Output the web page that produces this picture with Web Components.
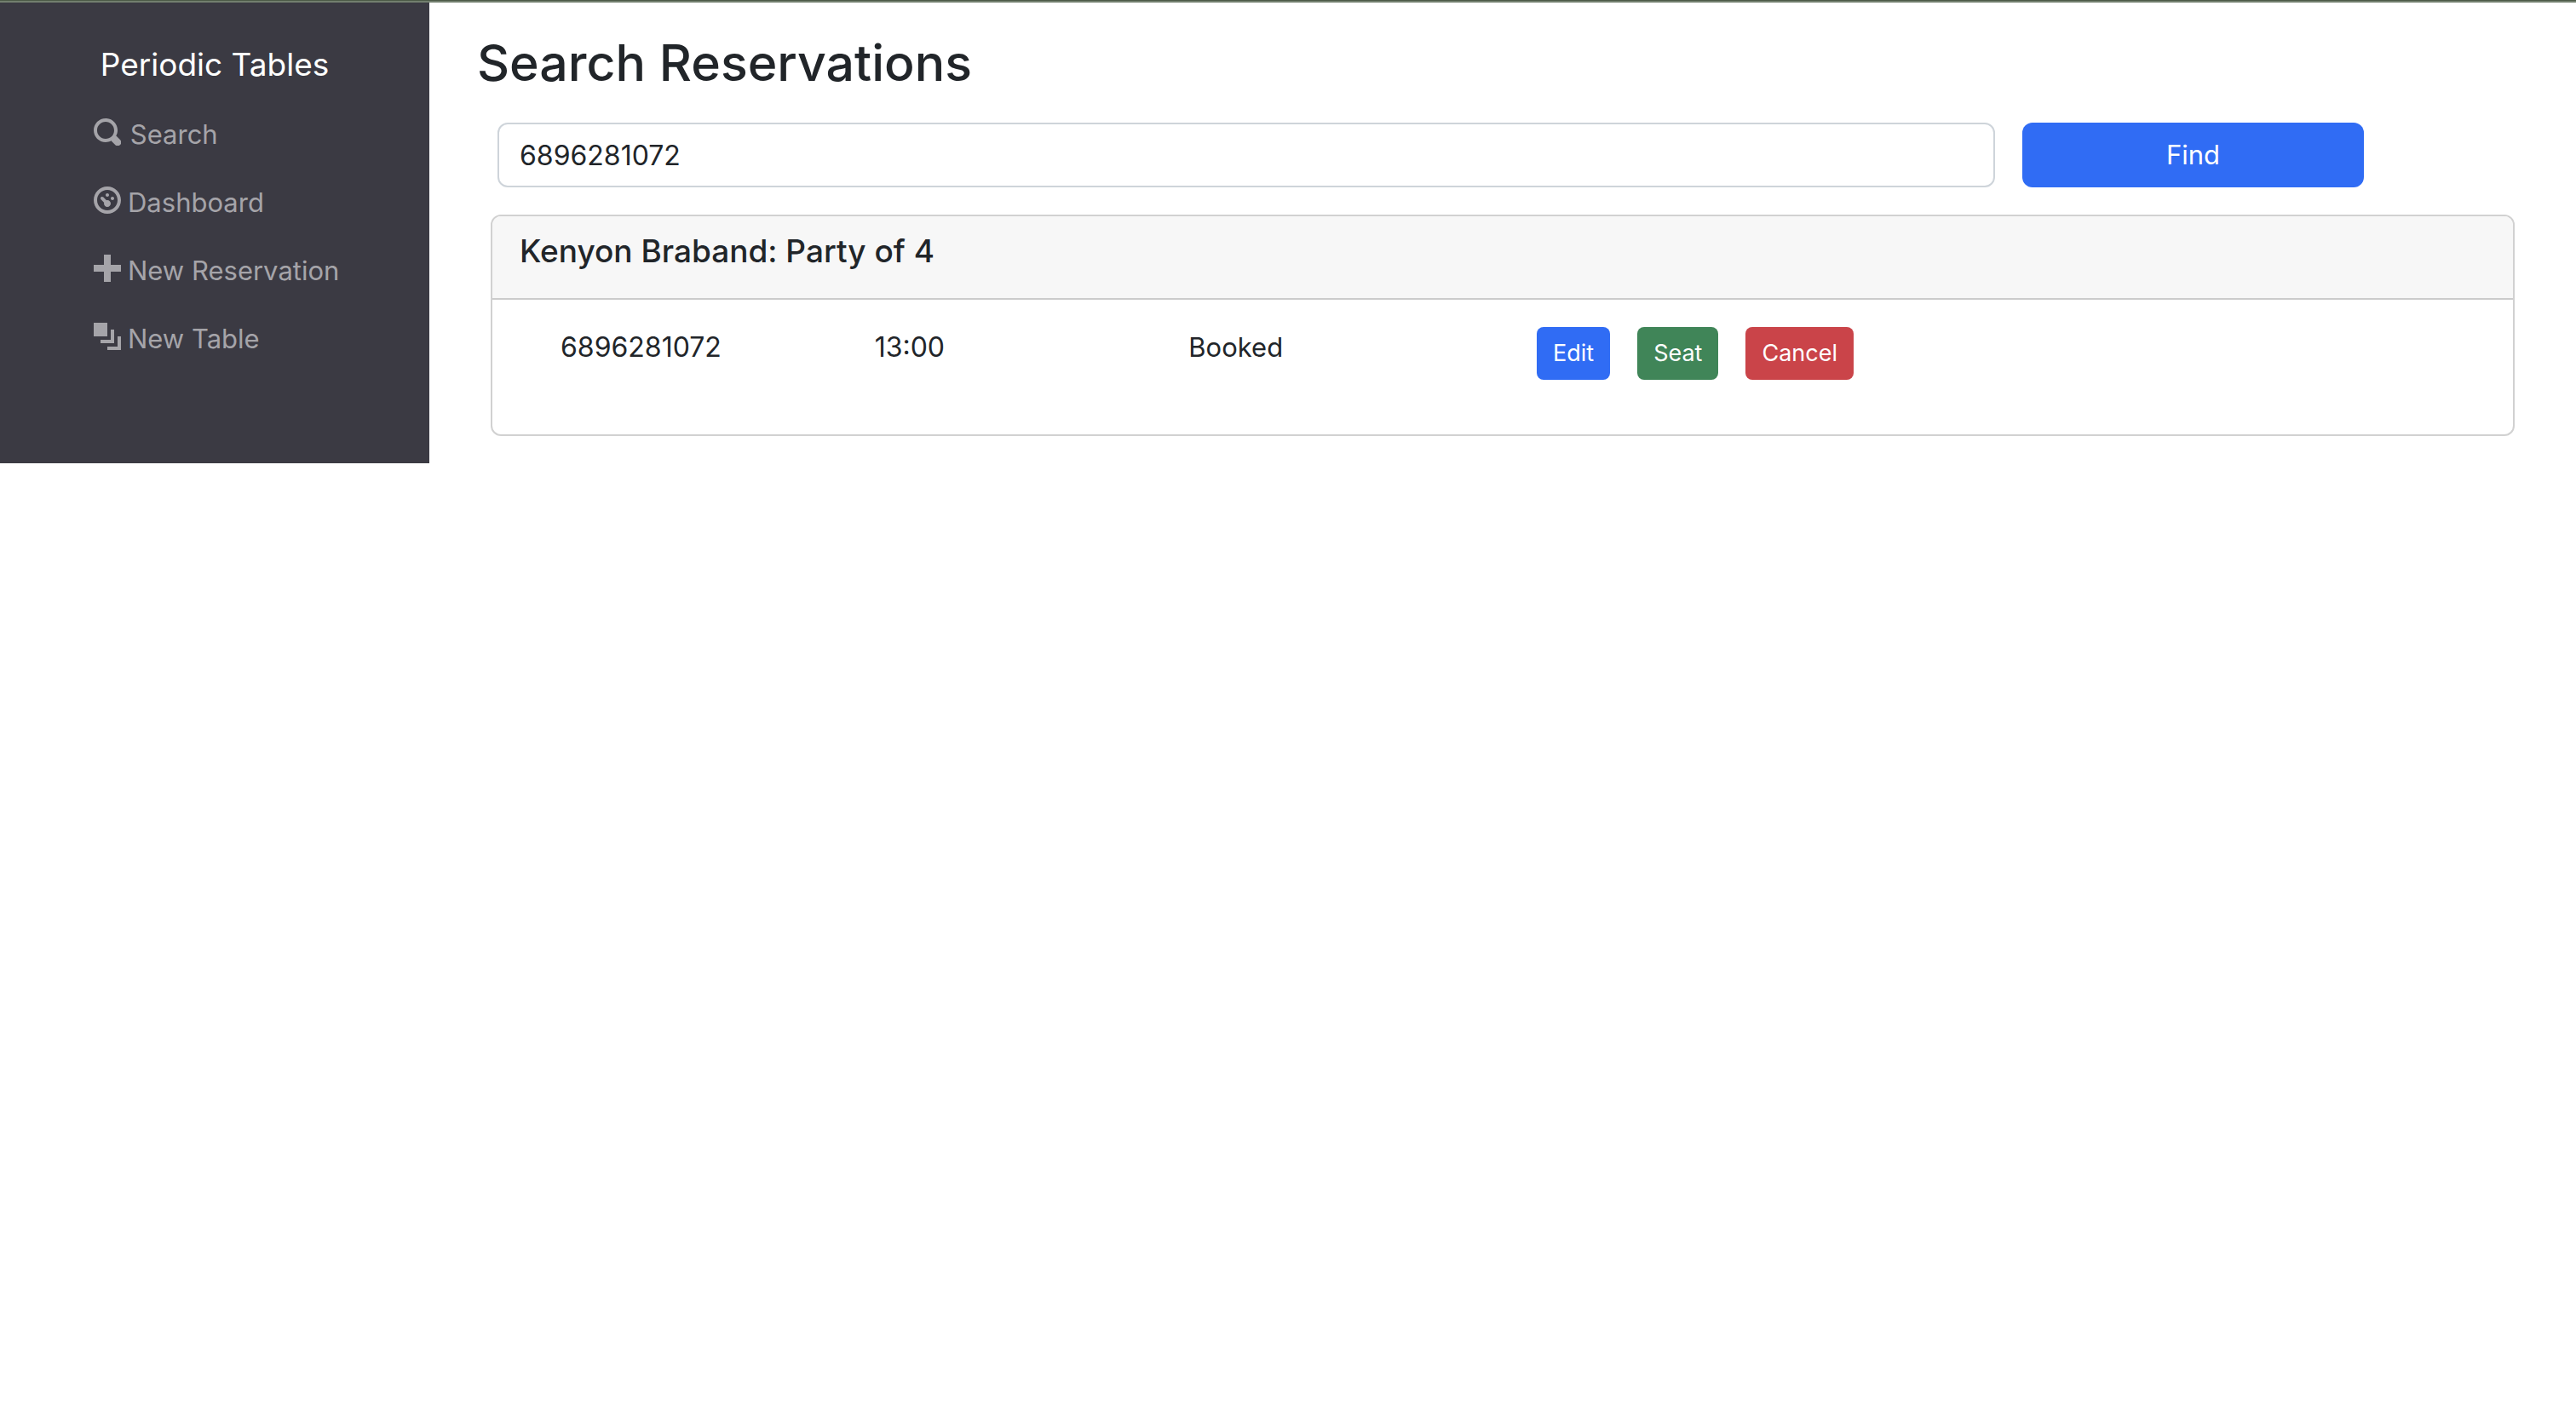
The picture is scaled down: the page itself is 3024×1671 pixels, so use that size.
<!DOCTYPE html>
<html lang="en">
<head>
<meta charset="utf-8">
<meta name="viewport" content="width=device-width, initial-scale=1">
<title>Periodic Tables</title>
<style>
  html { --ink: #212529; --blue: #306cf4; --green: #408558; --red: #ca4449; --number-size: 32px; }
  body { margin: 0; background: #fff; color: var(--ink); font: 400 31px/48px Inter, "Liberation Sans", sans-serif; }
</style>
</head>
<body>
<app-shell>
  <side-nav slot="nav" brand="Periodic Tables">
    <nav-link href="#search" icon="search">&hairsp;Search</nav-link>
    <nav-link href="#dashboard" icon="dashboard">Dashboard</nav-link>
    <nav-link href="#reservations" icon="plus">New Reservation</nav-link>
    <nav-link href="#tables" icon="layers">New Table</nav-link>
  </side-nav>
  <page-title>Search Reservations</page-title>
  <search-form value="6896281072">Find</search-form>
  <reservation-card>
    <span slot="title">Kenyon Braband: Party of 4</span>
    <span slot="phone">6896281072</span>
    <span slot="time">13:00</span>
    <span slot="status">Booked</span>
    <action-button slot="actions" tone="blue">Edit</action-button>
    <action-button slot="actions" tone="green">Seat</action-button>
    <action-button slot="actions" tone="red">Cancel</action-button>
  </reservation-card>
</app-shell>

<script>
const define = (name, render, after) => customElements.define(name, class extends HTMLElement {
  connectedCallback() {
    if (this.shadowRoot) return;
    this.attachShadow({ mode: "open" }).innerHTML = render(this);
    if (after) after(this);
  }
});

// 8 x 8 unit icon shapes
const icons = {
  search: "M3.5 0c-1.93 0-3.5 1.57-3.5 3.5s1.57 3.5 3.5 3.5c.59 0 1.17-.14 1.66-.41a1 1 0 0 0 .13.13l1 1a1.02 1.02 0 1 0 1.44-1.44l-1-1a1 1 0 0 0-.16-.13c.27-.49.44-1.06.44-1.66 0-1.93-1.55-3.5-3.5-3.5zm0 1c1.39 0 2.5 1.11 2.5 2.5 0 .66-.24 1.27-.66 1.72-.01.01-.02.02-.03.03a1 1 0 0 0-.13.13c-.44.4-1.04.63-1.69.63-1.39 0-2.5-1.11-2.5-2.5s1.11-2.5 2.5-2.5z",
  dashboard: "M4 0c-2.2 0-4 1.8-4 4s1.8 4 4 4 4-1.8 4-4-1.8-4-4-4zm0 1c1.66 0 3 1.34 3 3s-1.34 3-3 3-3-1.34-3-3 1.34-3 3-3zm0 1c-.28 0-.5.22-.5.5s.22.5.5.5.5-.22.5-.5-.22-.5-.5-.5zm-1.66 1a.5.5 0 0 0-.19.84l.91.91c-.02.08-.06.16-.06.25 0 .55.45 1 1 1s1-.45 1-1-.45-1-1-1c-.09 0-.17.04-.25.06l-.91-.91a.5.5 0 0 0-.44-.16.5.5 0 0 0-.06 0zm3.16 0c-.28 0-.5.22-.5.5s.22.5.5.5.5-.22.5-.5-.22-.5-.5-.5z",
  plus: "M3 0v3h-3v2h3v3h2v-3h3v-2h-3v-3h-2z",
  layers: "M0 0v4h4v-4h-4zm5 2v3h-3v1h4v-4h-1zm2 2v3h-3v1h4v-4h-1z"
};

define("app-shell", () => `
  <style>
    :host { display: block; }
    .strip { height: 2px; border-top: 1px solid #4c5a47; background: #727f6e; }
    .layout { display: grid; grid-template-columns: 1fr 5fr; }
    main { min-width: 0; padding: 31px 72px 32px 56px; }
  </style>
  <div class="strip"></div>
  <div class="layout"><slot name="nav"></slot><main><slot></slot></main></div>`);

define("side-nav", el => `
  <style>
    :host { display: block; background: #3b3a43; color: #fff; padding: 45px 24px 64px; box-sizing: border-box; }
    .brand { display: block; text-align: center; font-size: 37px; line-height: 56px; color: inherit; text-decoration: none; }
    nav { display: grid; gap: 32px; padding: 30px 0 0 86px; }
  </style>
  <a class="brand" href="#home">${el.getAttribute("brand")}</a>
  <nav><slot></slot></nav>`);

define("nav-link", el => `
  <style>
    :host { display: block; }
    a { display: flex; gap: 8px; color: #a5a4a9; text-decoration: none; white-space: pre; }
    svg { width: 32px; height: 32px; margin-top: 5px; flex: none; fill: currentColor; }
  </style>
  <a href="${el.getAttribute("href")}"><svg viewBox="0 0 8 8" aria-hidden="true"><path d="${icons[el.getAttribute("icon")]}"/></svg><slot></slot></a>`);

define("page-title", () => `
  <style>
    :host { display: block; }
    h1 { margin: 0 0 30px; font-size: 59px; line-height: 80px; font-weight: 500; }
  </style>
  <h1><slot></slot></h1>`);

define("search-form", el => `
  <style>
    :host { display: block; }
    form { display: grid; grid-template-columns: 57fr 13fr; gap: 32px; margin: 0 177px 32px 24px; }
    input, button { box-sizing: border-box; height: 76px; min-width: 0; margin: 0; border-radius: 12px; font: inherit; }
    input { width: 100%; padding: 12px 24px; border: 2px solid #ced4da; background: #fff; color: var(--ink); font-size: var(--number-size); outline: 0; }
    button { border: 0; padding: 0; background: var(--blue); color: #fff; }
  </style>
  <form>
    <input type="text" aria-label="Mobile number" value="${el.getAttribute("value")}">
    <button type="submit"><slot></slot></button>
  </form>`, el => el.shadowRoot.querySelector("form").addEventListener("submit", e => e.preventDefault()));

define("reservation-card", () => `
  <style>
    :host { display: block; margin-left: 16px; }
    article { border: 2px solid #d1d1d1; border-radius: 12px; overflow: hidden; }
    header { padding: 17px 32px 31px; background: #f7f7f7; border-bottom: 2px solid #cbcbcb; }
    h2 { margin: 0; font-size: 37px; line-height: 48px; font-weight: 500; }
    .row { display: grid; grid-template-columns: 1fr 1fr 1fr 3fr; padding: 32px 80px 64px; }
    .number { font-size: var(--number-size); }
    .actions { display: flex; gap: 32px; padding-left: 40px; }
  </style>
  <article>
    <header><h2><slot name="title"></slot></h2></header>
    <div class="row">
      <div class="number"><slot name="phone"></slot></div>
      <div class="number"><slot name="time"></slot></div>
      <div><slot name="status"></slot></div>
      <div class="actions"><slot name="actions"></slot></div>
    </div>
  </article>`);

define("action-button", el => `
  <style>
    :host { display: block; }
    button { display: block; height: 62px; margin: 0; padding: 0 19px; border: 0; border-radius: 8px; background: var(--${el.getAttribute("tone")}); color: #fff; font: inherit; font-size: 27px; }
  </style>
  <button type="button"><slot></slot></button>`);
</script>
</body>
</html>
